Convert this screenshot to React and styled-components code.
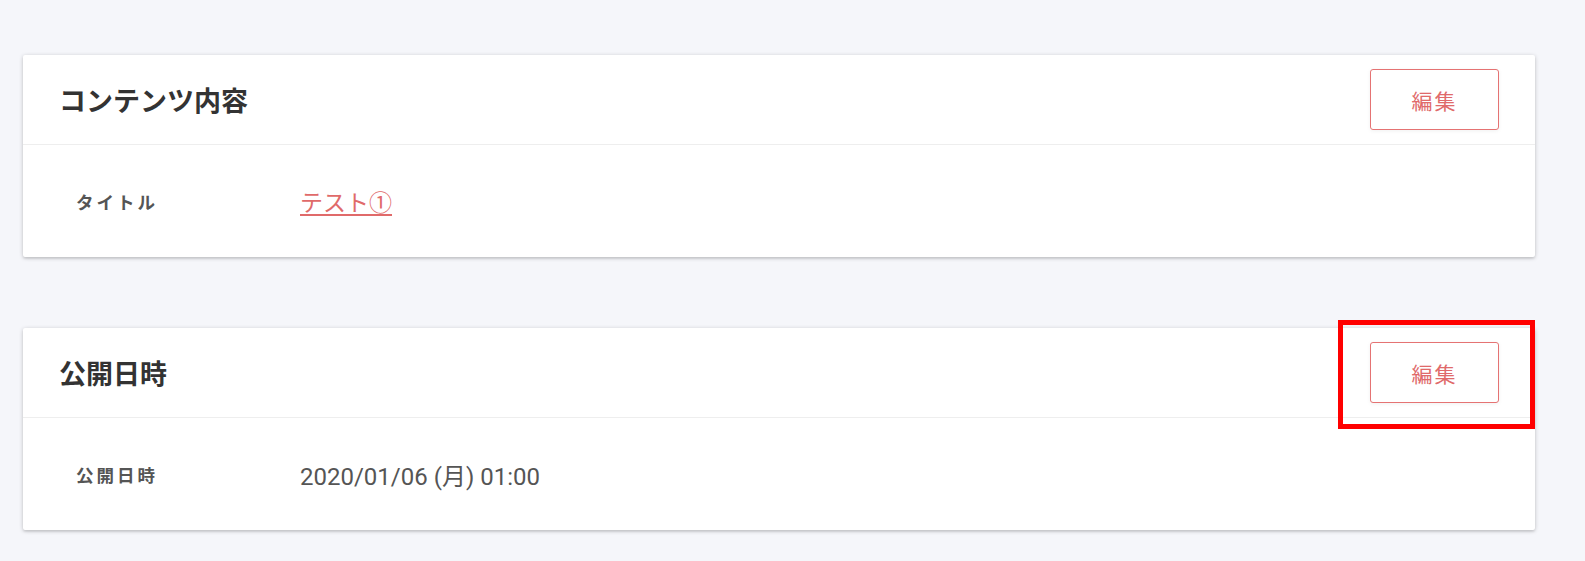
import React from 'react'
import styled, { createGlobalStyle } from 'styled-components'

const GlobalStyle = createGlobalStyle`
  html, body {
    margin: 0;
    padding: 0;
    background: #f5f6fa;
    font-family: Roboto, 'Noto Sans CJK JP', sans-serif;
    overflow: hidden;
  }
`

const Page = styled.div`
  padding: 55px 50px 20px 23px;
  display: flex;
  flex-direction: column;
  gap: 71px;
`

const Card = styled.section`
  position: relative;
  background: #fff;
  border-radius: 2px;
  box-shadow: 0 1px 4px rgba(0, 0, 0, 0.22), 0 2px 2px rgba(0, 0, 0, 0.06);
`

const Header = styled.div`
  height: 90px;
  box-sizing: border-box;
  padding: 0 36px 0 36px;
  display: flex;
  align-items: center;
  justify-content: space-between;
  border-bottom: 1px solid #eeeeee;
`

const Title = styled.h2`
  margin: 0;
  font-family: 'Noto Sans CJK JP', sans-serif;
  font-size: 27px;
  font-weight: 700;
  color: #333;
`

const EditButton = styled.button`
  width: 129px;
  height: 61px;
  background: #fff;
  border: 1.5px solid #e57373;
  border-radius: 3px;
  color: #e06a6a;
  font-family: 'Noto Sans CJK JP', sans-serif;
  font-size: 21px;
  letter-spacing: 2px;
  cursor: pointer;
  box-shadow: 0 1px 4px rgba(0, 0, 0, 0.06);
`

const Body = styled.div`
  height: 112px;
  padding-left: 53px;
  display: flex;
  align-items: center;
`

const Label = styled.div`
  width: 224px;
  font-family: 'Noto Sans CJK JP', sans-serif;
  font-size: 17.5px;
  font-weight: 700;
  color: #555;
  letter-spacing: 3px;
`

const Value = styled.div`
  font-size: 24px;
  color: #555;
`

const ValueLink = styled.a`
  font-family: 'Noto Sans CJK JP', sans-serif;
  font-size: 23px;
  color: #e06a6a;
  text-decoration: underline;
  text-decoration-thickness: 1.5px;
  text-underline-offset: 3px;
`

const Highlight = styled.div`
  position: absolute;
  top: -8px;
  right: 0;
  width: 197px;
  height: 109px;
  box-sizing: border-box;
  border: 5px solid #ff0000;
  pointer-events: none;
`

const sections = [
  { title: 'コンテンツ内容', label: 'タイトル', value: 'テスト①', link: true },
  { title: '公開日時', label: '公開日時', value: '2020/01/06 (月) 01:00', highlight: true },
]

export default function App() {
  return (
    <>
      <GlobalStyle />
      <Page>
        {sections.map((s) => (
          <Card key={s.title}>
            <Header>
              <Title>{s.title}</Title>
              <EditButton>編集</EditButton>
            </Header>
            <Body>
              <Label>{s.label}</Label>
              {s.link ? <ValueLink href="#">{s.value}</ValueLink> : <Value>{s.value}</Value>}
            </Body>
            {s.highlight && <Highlight />}
          </Card>
        ))}
      </Page>
    </>
  )
}
